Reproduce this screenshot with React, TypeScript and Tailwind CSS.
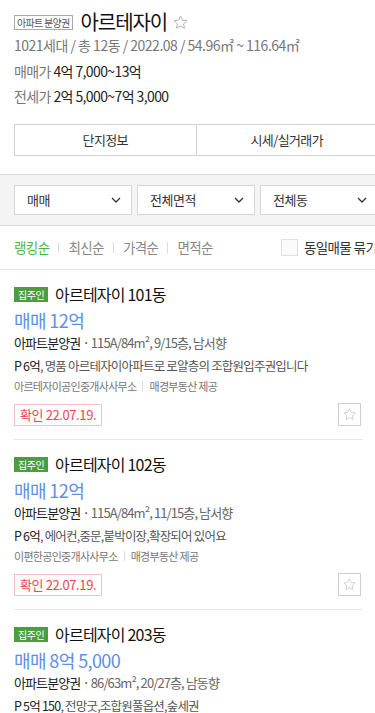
import React from 'react';

const FONT = { fontFamily: '"Noto Sans CJK KR", "Noto Sans", sans-serif' };

type Listing = {
  dong: string;
  price: string;
  spec: string;
  desc: string;
  descRest: string;
  agent: string;
};

const LISTINGS: Listing[] = [
  {
    dong: '아르테자이 101동',
    price: '매매 12억',
    spec: '115A/84m², 9/15층, 남서향',
    desc: 'P 6억',
    descRest: ', 명품 아르테자이아파트로 로얄층의 조합원입주권입니다',
    agent: '아르테자이공인중개사사무소',
  },
  {
    dong: '아르테자이 102동',
    price: '매매 12억',
    spec: '115A/84m², 11/15층, 남서향',
    desc: 'P 6억',
    descRest: ', 에어컨,중문,붙박이장,확장되어 있어요',
    agent: '이편한공인중개사사무소',
  },
  {
    dong: '아르테자이 203동',
    price: '매매 8억 5,000',
    spec: '86/63m², 20/27층, 남동향',
    desc: 'P 5억 150',
    descRest: ', 전망굿,조합원풀옵션,숲세권',
    agent: '아르테자이공인중개사사무소',
  },
];

const SORTS = ['랭킹순', '최신순', '가격순', '면적순'];

function StarIcon({ className }: { className?: string }) {
  return (
    <svg viewBox="0 0 24 24" className={className} fill="none" stroke="currentColor" strokeWidth="1.3" strokeLinejoin="round">
      <path d="M12 2.8l2.75 5.85 6.35.78-4.68 4.38 1.2 6.3L12 17.02 6.38 20.1l1.2-6.3L2.9 9.43l6.35-.78z" />
    </svg>
  );
}

function Chevron() {
  return (
    <svg viewBox="0 0 10 6" className="w-[10px] h-[6px]" fill="none" stroke="#333" strokeWidth="1.3">
      <path d="M1 1l4 4 4-4" />
    </svg>
  );
}

function Select({ label }: { label: string }) {
  return (
    <div className="flex-1 h-[30px] bg-white border border-[#d7d7d7] flex items-center justify-between pl-[12px] pr-[10px]">
      <span className="text-[13px] text-[#333] tracking-[-0.5px]">{label}</span>
      <Chevron />
    </div>
  );
}

function ListingItem({ item }: { item: Listing }) {
  return (
    <div className="pt-[14px] pb-[13px] border-b border-[#e9e9e9]">
      <div className="flex items-center h-[20px]">
        <span className="bg-[#4c9d3e] text-white text-[10px] leading-[15px] h-[15px] px-[4px] mr-[7px] tracking-[-0.5px]">집주인</span>
        <span className="text-[16px] text-[#111] tracking-[-0.8px]">{item.dong}</span>
      </div>
      <div className="mt-[3px] h-[26px] leading-[26px] text-[18px] text-[#5d8fe5] tracking-[-0.6px]">{item.price}</div>
      <div className="h-[20px] leading-[20px] text-[13px] tracking-[-0.9px] text-[#666]">
        <span className="text-[#222]">아파트분양권</span>
        <span className="text-[#222]"> · </span>
        {item.spec}
      </div>
      <div className="mt-[3px] h-[20px] leading-[20px] text-[12.5px] tracking-[-0.8px] text-[#555]">
        <span className="text-[#222]">{item.desc}</span>
        {item.descRest}
      </div>
      <div className="mt-[1px] h-[18px] leading-[18px] text-[11px] tracking-[-0.7px] text-[#777] flex items-center">
        <span>{item.agent}</span>
        <span className="mx-[6px] w-px h-[10px] bg-[#ddd]" />
        <span>매경부동산 제공</span>
      </div>
      <div className="mt-[8px] flex items-center justify-between">
        <span className="h-[22px] leading-[20px] px-[5px] border border-[#f2c3c6] text-[#e5484d] text-[13px] tracking-[-0.4px]">확인 22.07.19.</span>
        <span className="mr-[2px] w-[23px] h-[23px] border border-[#cfcfcf] flex items-center justify-center text-[#c8c8c8]">
          <StarIcon className="w-[15px] h-[15px]" />
        </span>
      </div>
    </div>
  );
}

export default function App() {
  return (
    <div className="w-[375px] min-h-[713px] overflow-hidden bg-white" style={FONT}>
      <div className="w-[392px]">
        {/* header */}
        <div className="px-[14px] pt-[10px]">
          <div className="flex items-center h-[24px]">
            <span className="border border-[#aaa] text-[10px] leading-[13px] h-[15px] px-[2px] text-[#555] tracking-[-0.7px] mr-[8px]">아파트 분양권</span>
            <span className="text-[20px] text-[#111] tracking-[-1.1px]">아르테자이</span>
            <StarIcon className="ml-[5px] w-[17px] h-[17px] text-[#aaa]" />
          </div>
          <div className="mt-[2px] h-[18px] leading-[18px] text-[14px] text-[#777] tracking-[-0.5px]">
            1021세대 / 총 12동 / 2022.08 / 54.96㎡ ~ 116.64㎡
          </div>
          <div className="mt-[7px] h-[20px] leading-[20px] text-[14px] tracking-[-0.6px]">
            <span className="text-[#777]">매매가</span> <span className="text-[#222]">4억 7,000~13억</span>
          </div>
          <div className="mt-[5px] h-[20px] leading-[20px] text-[14px] tracking-[-0.6px]">
            <span className="text-[#777]">전세가</span> <span className="text-[#222]">2억 5,000~7억 3,000</span>
          </div>
          <div className="mt-[18px] flex h-[32px] border border-[#d2d2d2]">
            <div className="flex-1 flex items-center justify-center text-[13px] text-[#333] tracking-[-0.6px] border-r border-[#d2d2d2]">단지정보</div>
            <div className="flex-1 flex items-center justify-center text-[13px] text-[#333] tracking-[-0.6px]">시세/실거래가</div>
          </div>
        </div>

        {/* filters */}
        <div className="mt-[18px] bg-[#f4f4f4] border-y border-[#dcdcdc] px-[14px] py-[10px] flex gap-[5px]">
          <Select label="매매" />
          <Select label="전체면적" />
          <Select label="전체동" />
        </div>

        {/* sort */}
        <div className="h-[44px] border-b border-[#e4e4e4] px-[14px] flex items-center text-[13.5px] tracking-[-0.6px] whitespace-nowrap">
          {SORTS.map((s, i) => (
            <React.Fragment key={s}>
              {i > 0 && <span className="shrink-0 mx-[9px] w-px h-[11px] bg-[#ddd]" />}
              <span className={`shrink-0 ${i === 0 ? 'text-[#4fb33d]' : 'text-[#888]'}`}>{s}</span>
            </React.Fragment>
          ))}
          <span className="shrink-0 ml-[68px] w-[17px] h-[17px] border border-[#e0e0e0] bg-[#fafafa]" />
          <span className="shrink-0 ml-[6px] text-[#333]">동일매물 묶기</span>
        </div>
      </div>

      {/* listings */}
      <div className="pl-[14px] pr-[12px]">
        {LISTINGS.map((l) => (
          <ListingItem key={l.dong} item={l} />
        ))}
      </div>
    </div>
  );
}
